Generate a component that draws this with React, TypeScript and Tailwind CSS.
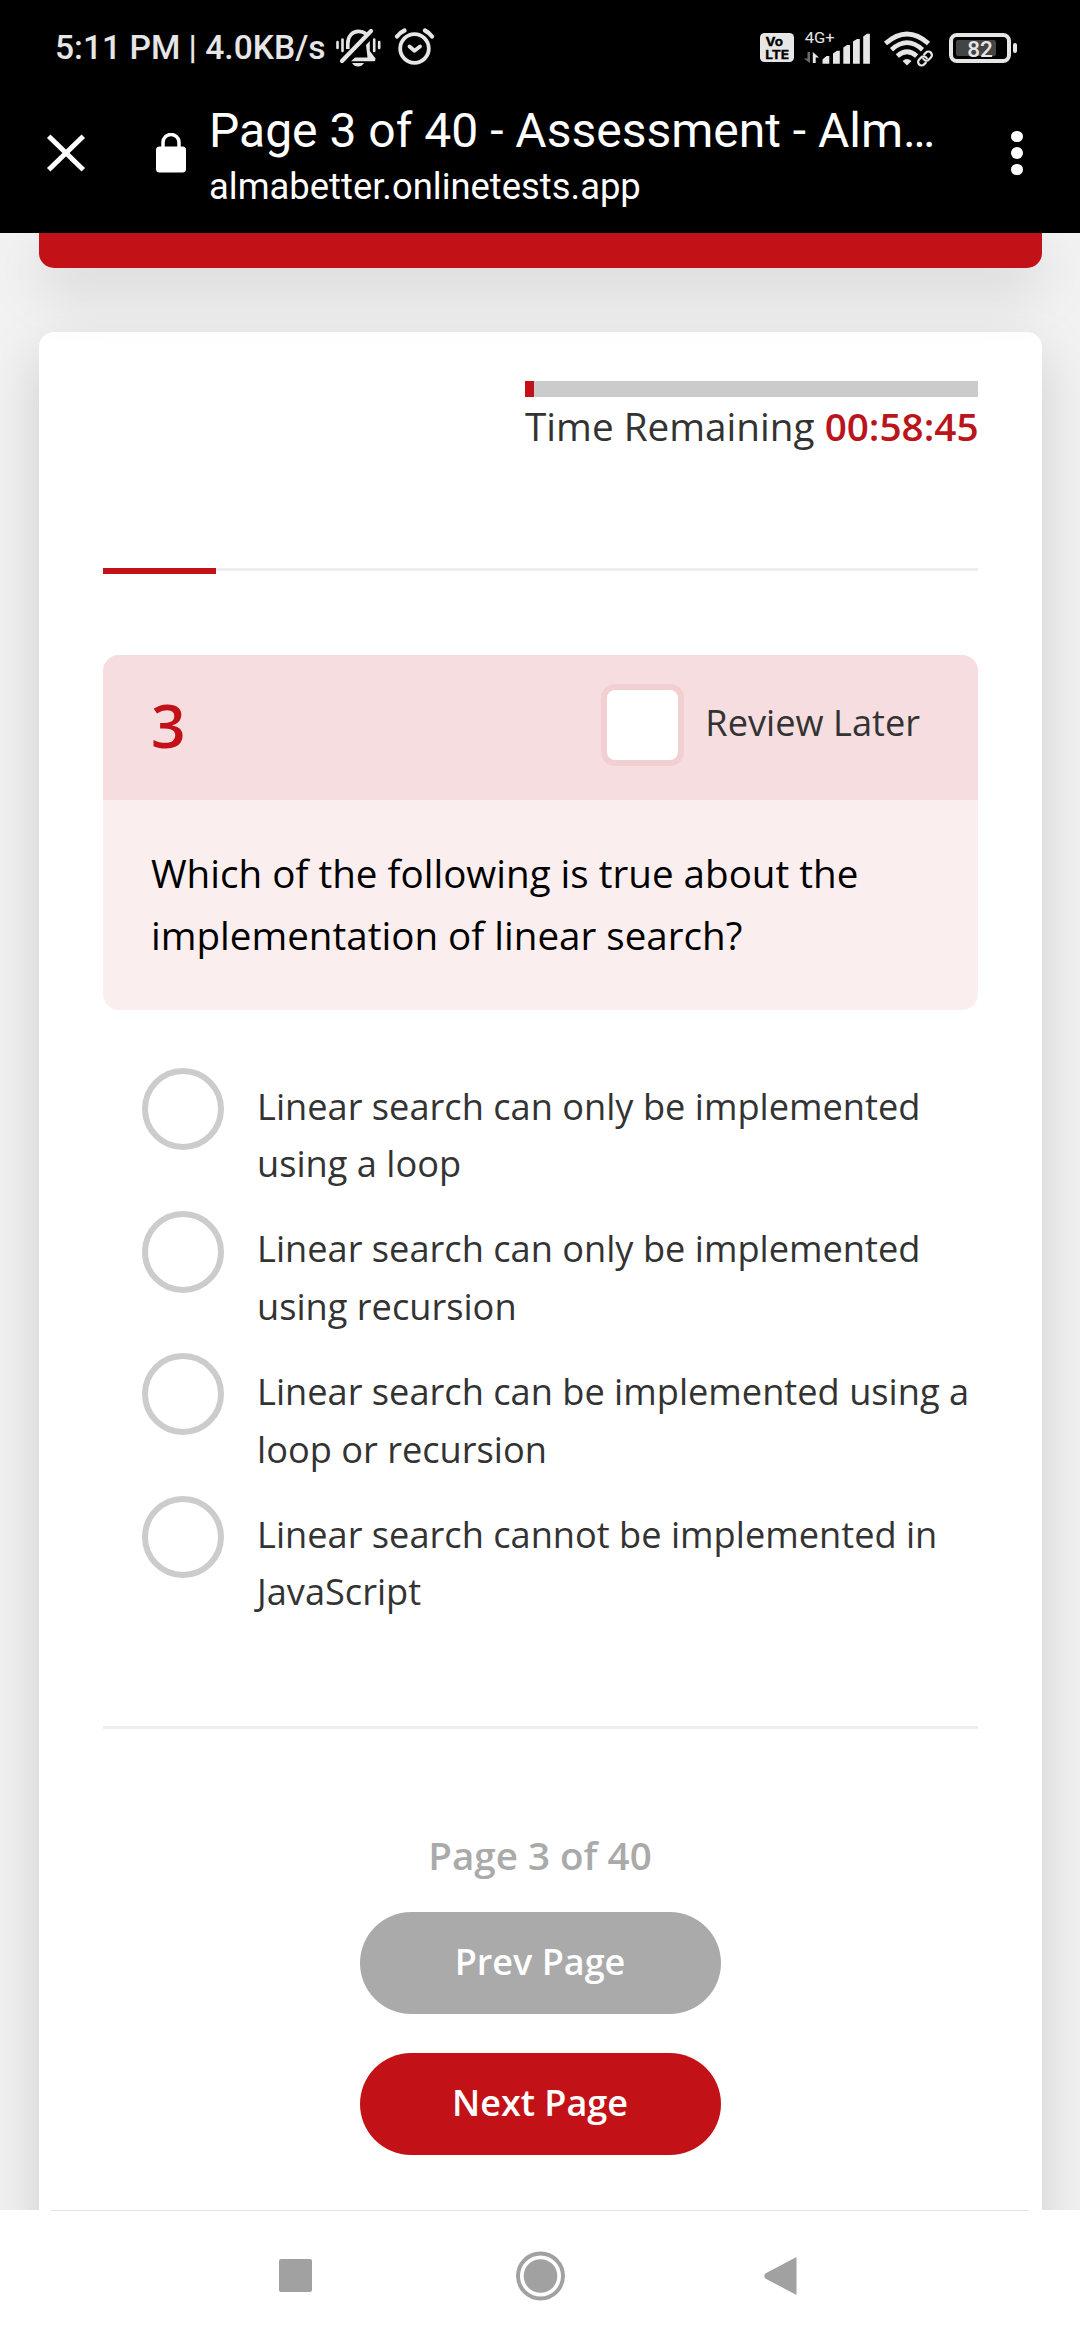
import React from "react";

const options = [
  "Linear search can only be implemented using a loop",
  "Linear search can only be implemented using recursion",
  "Linear search can be implemented using a loop or recursion",
  "Linear search cannot be implemented in JavaScript",
];

function MutedBell() {
  return (
    <svg className="ml-[10px] h-[40px] w-[45px]" viewBox="335 28 45 40" fill="none" stroke="#e6e6e6">
      <path d="M346.8 49V43.5C346.8 36.5 351 31.4 357.5 31.4C360.5 31.4 363 32.3 365 33.8" strokeWidth="3.6" />
      <path d="M341 61L370 31" strokeWidth="4.2" strokeLinecap="round" />
      <path d="M350 61.300L354 57.500H366.500L365 45L368.800 41V51L374.500 58.500Q374.500 61.300 373 61.300Z" fill="#e6e6e6" stroke="none" />
      <path d="M351 63H363C361.5 65.5 359.5 66.5 357 66.5C354.5 66.5 352.5 65.5 351 63Z" fill="#e6e6e6" stroke="none" />
      <path d="M336.5 42V48M341.5 39.5V51M373.2 39.5V51M378.2 42V48" strokeWidth="2.6" strokeLinecap="round" />
    </svg>
  );
}

function AlarmClock() {
  return (
    <svg className="ml-[13px] h-[40px] w-[42px]" viewBox="393 28 42 40" fill="none" stroke="#e6e6e6">
      <circle cx="413.5" cy="48.5" r="14.3" strokeWidth="3.8" />
      <path d="M396 36.5Q399 32.5 403.5 30.5M424 30.5Q428 32.5 431 36.5" strokeWidth="4.2" strokeLinecap="round" />
      <path d="M408.5 46.5L413.5 50.7L419 46.5" strokeWidth="3.8" strokeLinecap="round" strokeLinejoin="round" />
    </svg>
  );
}

function VoLte() {
  return (
    <svg className="h-[30px] w-[35px]" viewBox="760 33 35 30">
      <rect x="760" y="33" width="34" height="29" rx="4.5" fill="#e6e6e6" />
      <g fill="#000" stroke="#000" strokeWidth="0.3" fontFamily="Inter, sans-serif" fontWeight="700">
        <text x="765.5" y="46" fontSize="11.8" textLength="17.500" lengthAdjust="spacingAndGlyphs">Vo</text>
        <text x="765.2" y="58.6" fontSize="12.4" textLength="24" lengthAdjust="spacingAndGlyphs">LTE</text>
      </g>
    </svg>
  );
}

function Signal() {
  return (
    <svg className="ml-[8px] h-[44px] w-[69px]" viewBox="803 25 69 44" fill="#e6e6e6">
      <text x="804.7" y="42" fontSize="15.5" textLength="30" lengthAdjust="spacingAndGlyphs" fontFamily="Roboto, sans-serif">4G+</text>
      <path d="M807.5 51H810V62L803.7 57.5H807.5Z" fill="#6b6b6b" />
      <path d="M812.8 51L819 56.5H815.7V62H812.8Z" />
      <path d="M822.5 58.5L826.5 55H829.3V62.7H822.5Z" />
      <path d="M833 52.5L837 49.7H839.8V62.7H833Z" />
      <path d="M843.3 46.5L847 43.9H850V62.7H843.3Z" />
      <path d="M853 40.5L857 38H859.8V62.7H853Z" />
      <path d="M863.2 35.5L867 32.7H869.9V62.7H863.2Z" />
    </svg>
  );
}

function WifiLink() {
  return (
    <svg className="ml-[11px] h-[37px] w-[52px]" viewBox="883 29 52 37" fill="none" stroke="#e6e6e6">
      <path d="M885.5 42.5Q907 23.5 928.5 42.5" strokeWidth="4.8" />
      <path d="M891.5 48.7Q907 34.5 922.5 48.7" strokeWidth="4.6" />
      <path d="M897.3 55Q907 46.5 916.7 55" strokeWidth="4.6" />
      <path d="M902.5 60Q907 56.2 911.5 60L907 64.5Z" fill="#e6e6e6" stroke="none" />
      <g transform="rotate(-45 925 57.5)">
        <rect x="914" y="53" width="22" height="9" fill="#000" stroke="none" />
        <path d="M923.5 61H920.2A3.5 3.5 0 0 1 920.2 54H923.2A3.5 3.5 0 0 1 926 59.4" strokeWidth="2.2" />
        <path d="M926.5 54H929.8A3.5 3.5 0 0 1 929.8 61H926.8A3.5 3.5 0 0 1 924 55.6" strokeWidth="2.2" />
      </g>
    </svg>
  );
}

function Battery() {
  return (
    <svg className="ml-[14px] h-[32px] w-[70px]" viewBox="949 31 70 32">
      <rect x="951" y="34" width="58" height="26" rx="6" fill="none" stroke="#e6e6e6" strokeWidth="4" />
      <rect x="956" y="39" width="40" height="16" rx="2" fill="#444" />
      <rect x="1013" y="42" width="4" height="10" rx="2" fill="#e6e6e6" />
      <text x="980" y="56" textAnchor="middle" fontSize="22.5" fontWeight="500" fill="#e6e6e6" fontFamily="Roboto, sans-serif">82</text>
    </svg>
  );
}

function BrowserHeader() {
  return (
    <header className="relative z-20 h-[233px] shrink-0 bg-black font-['Roboto',sans-serif] text-white">
      <div className="flex h-[96px] items-center justify-between pr-[61px] pl-[55px]">
        <div className="flex items-center">
          <span className="text-[33.6px] leading-[40px] font-medium whitespace-pre text-[#e6e6e6]">5:11 PM | 4.0KB/s</span>
          <MutedBell />
          <AlarmClock />
        </div>
        <div className="flex items-center">
          <VoLte />
          <Signal />
          <WifiLink />
          <Battery />
        </div>
      </div>
      <div className="flex h-[114px] items-center">
        <svg className="ml-[46px] h-[40px] w-[40px] shrink-0" viewBox="0 0 40 40" stroke="#fff" strokeWidth="5">
          <path d="M2.7 3.2L37.3 36.8M37.3 3.2L2.7 36.8" />
        </svg>
        <svg className="ml-[70px] h-[40px] w-[30px] shrink-0" viewBox="0 0 30 40">
          <rect y="13.5" width="30" height="26" rx="3.5" fill="#fff" />
          <path d="M7 15V9.5a8 8 0 0 1 16 0V15" fill="none" stroke="#fff" strokeWidth="3.5" />
        </svg>
        <div className="ml-[23px] w-[739px] pt-[6px]">
          <div className="text-[48px] leading-[60px] whitespace-nowrap">Page 3 of 40 - Assessment - Alm…</div>
          <div className="mt-[2px] text-[36.4px] leading-[48px]">almabetter.onlinetests.app</div>
        </div>
        <div className="ml-[63px] flex flex-col gap-[5px]">
          <span className="h-[11.5px] w-[11.5px] rounded-full bg-white" />
          <span className="h-[11.5px] w-[11.5px] rounded-full bg-white" />
          <span className="h-[11.5px] w-[11.5px] rounded-full bg-white" />
        </div>
      </div>
    </header>
  );
}

export default function App() {
  return (
    <div className="flex h-[2340px] w-[1080px] flex-col overflow-hidden bg-white font-['Open_Sans',sans-serif] text-[#333]">
      <BrowserHeader />
      <main className="h-[1977px] shrink-0 overflow-hidden bg-[#f2f2f2] pr-[38px] pl-[39px]">
        <div className="relative z-10 h-[35px] rounded-b-[15px] bg-[#c31217] shadow-[0_20px_58px_rgba(0,0,0,0.15)]" />
        <section className="mt-[64px] h-[2100px] rounded-[15px] bg-white px-[64px] pt-[49px] shadow-[0_20px_58px_rgba(0,0,0,0.15)]">
          <div className="ml-auto w-[453px]">
            <div className="h-[16px] bg-[#cbcbcb]">
              <div className="h-full w-[9px] bg-[#c31217]" />
            </div>
            <div className="mt-[3px] text-right text-[38.7px] leading-[52px] whitespace-nowrap">
              Time Remaining <span className="font-semibold text-[#b9151b]">00:58:45</span>
            </div>
          </div>
          <div className="mt-[116px] h-[6px]">
            <div className="h-[3px] bg-[#eee]">
              <div className="h-[6px] w-[113px] bg-[#c31217]" />
            </div>
          </div>
          <article className="mt-[81px] h-[355px] overflow-hidden rounded-[16px] bg-[#faeeee]">
            <div className="flex h-[145px] items-start bg-[#f6dee0]">
              <div className="mt-[39.5px] ml-[48px] text-[60.5px] leading-[60px] font-semibold text-[#c31217]">3</div>
              <div className="ml-auto flex items-start pr-[58px]">
                <span className="mt-[29px] h-[82px] w-[83px] rounded-[14px] border-6 border-[#f2d0d2] bg-white" />
                <span className="mt-[38.5px] ml-[21px] text-[36.2px] leading-[57.2px]">Review Later</span>
              </div>
            </div>
            <p className="pt-[42px] pl-[48px] text-[38.6px] leading-[62px] text-black">
              Which of the following is true about the
              <br />
              implementation of linear search?
            </p>
          </article>
          <div className="mt-[58px]">
            {options.map((option) => (
              <div key={option} className="flex h-[142.7px] items-start pl-[39px]">
                <span className="h-[82px] w-[82px] shrink-0 rounded-full border-6 border-[#ccc]" />
                <span className="mt-[9.5px] ml-[33px] w-[728px] text-[36.2px] leading-[57.8px]">{option}</span>
              </div>
            ))}
          </div>
          <div className="mt-[87.2px] h-[3px] bg-[#eee]" />
          <div className="mt-[96px] flex flex-col items-center pr-px font-semibold">
            <div className="text-[38.6px] leading-[60px] text-[#aaa]">Page 3 of 40</div>
            <div className="mt-[27px] flex h-[102px] w-[361px] justify-center rounded-full bg-[#aaa] pt-[21.5px] text-[36px] leading-[57.2px] text-white">Prev Page</div>
            <div className="mt-[39px] flex h-[102px] w-[361px] justify-center rounded-full bg-[#c31217] pt-[21.5px] text-[36px] leading-[57.2px] text-white">Next Page</div>
          </div>
        </section>
      </main>
      <nav className="h-[130px] shrink-0 bg-white">
        <div className="ml-[51px] h-px w-[977px] bg-[#e3e3e3]" />
        <div className="flex h-[129px] items-center pl-[279px]">
          <span className="h-[33px] w-[33px] rounded-[2px] bg-[#a1a1a1]" />
          <svg className="ml-[203px] h-[50px] w-[50px]" viewBox="0 0 50 50">
            <circle cx="25.5" cy="25" r="22.5" fill="none" stroke="#a1a1a1" strokeWidth="4" />
            <circle cx="25.5" cy="25" r="16.8" fill="#a1a1a1" />
          </svg>
          <svg className="ml-[199px] h-[40px] w-[34px]" viewBox="0 0 34 40">
            <path d="M32.5 1V39L1.3 22.5Q-0.7 20 1.3 17.5Z" fill="#a1a1a1" />
          </svg>
        </div>
      </nav>
    </div>
  );
}
